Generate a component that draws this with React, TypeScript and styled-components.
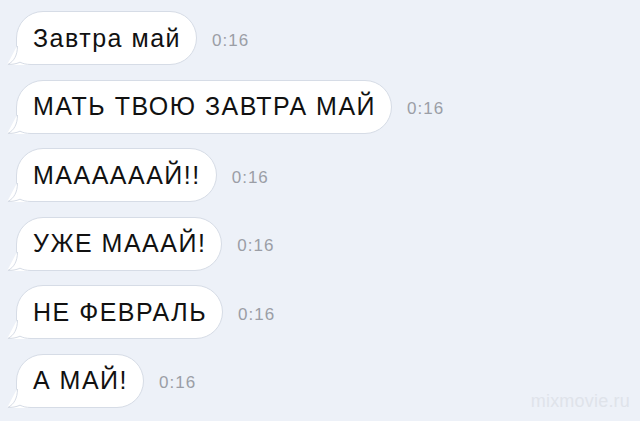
import React from "react";
import styled, { createGlobalStyle } from "styled-components";

const Global = createGlobalStyle`
  html, body { margin: 0; padding: 0; }
  body {
    width: 640px;
    height: 421px;
    overflow: hidden;
    background: #edf1f8;
    font-family: "Liberation Sans", Arial, sans-serif;
  }
`;

const Screen = styled.div`
  position: relative;
  width: 640px;
  height: 421px;
  box-sizing: border-box;
  padding: 11px 0 0 16px;
  display: flex;
  flex-direction: column;
  gap: 14.5px;
`;

const Row = styled.div`
  display: flex;
  align-items: center;
  gap: 15px;
`;

const Bubble = styled.div`
  position: relative;
  box-sizing: border-box;
  height: 54px;
  padding: 0 15px 0 16px;
  display: flex;
  align-items: center;
  background: #ffffff;
  border: 1px solid #d6dce6;
  border-radius: 27px 27px 27px 0;
  color: #111111;
  font-size: 25px;
  letter-spacing: 1.5px;
  white-space: nowrap;
`;

const Tail = styled.svg`
  position: absolute;
  left: -10px;
  bottom: -1px;
  width: 24px;
  height: 19px;
  overflow: visible;
`;

const Time = styled.span`
  font-size: 17px;
  letter-spacing: 1px;
  color: #9b9ea6;
  padding-top: 5px;
`;

const Watermark = styled.div`
  position: absolute;
  right: 10px;
  bottom: 9px;
  font-size: 18px;
  color: #dfe3ea;
  letter-spacing: 0.2px;
`;

const messages = [
  "Завтра май",
  "МАТЬ ТВОЮ ЗАВТРА МАЙ",
  "МААААААЙ!!",
  "УЖЕ МАААЙ!",
  "НЕ ФЕВРАЛЬ",
  "А МАЙ!",
];

function Message({ text }: { text: string }) {
  return (
    <Row>
      <Bubble>
        {text}
        <Tail viewBox="0 0 24 19">
          <path d="M10 0 L24 0 L24 19 L0 19 Z" fill="#ffffff" />
          <path
            d="M10.5 0 C10.5 9 7 15.5 0.8 18.5 C5 18.5 9 18 13 16.2 C16 17.6 19 18.5 24 18.5"
            fill="#ffffff"
            stroke="#d6dce6"
            strokeWidth="1"
          />
        </Tail>
      </Bubble>
      <Time>0:16</Time>
    </Row>
  );
}

export default function App() {
  return (
    <>
      <Global />
      <Screen>
        {messages.map((m) => (
          <Message key={m} text={m} />
        ))}
        <Watermark>mixmovie.ru</Watermark>
      </Screen>
    </>
  );
}
